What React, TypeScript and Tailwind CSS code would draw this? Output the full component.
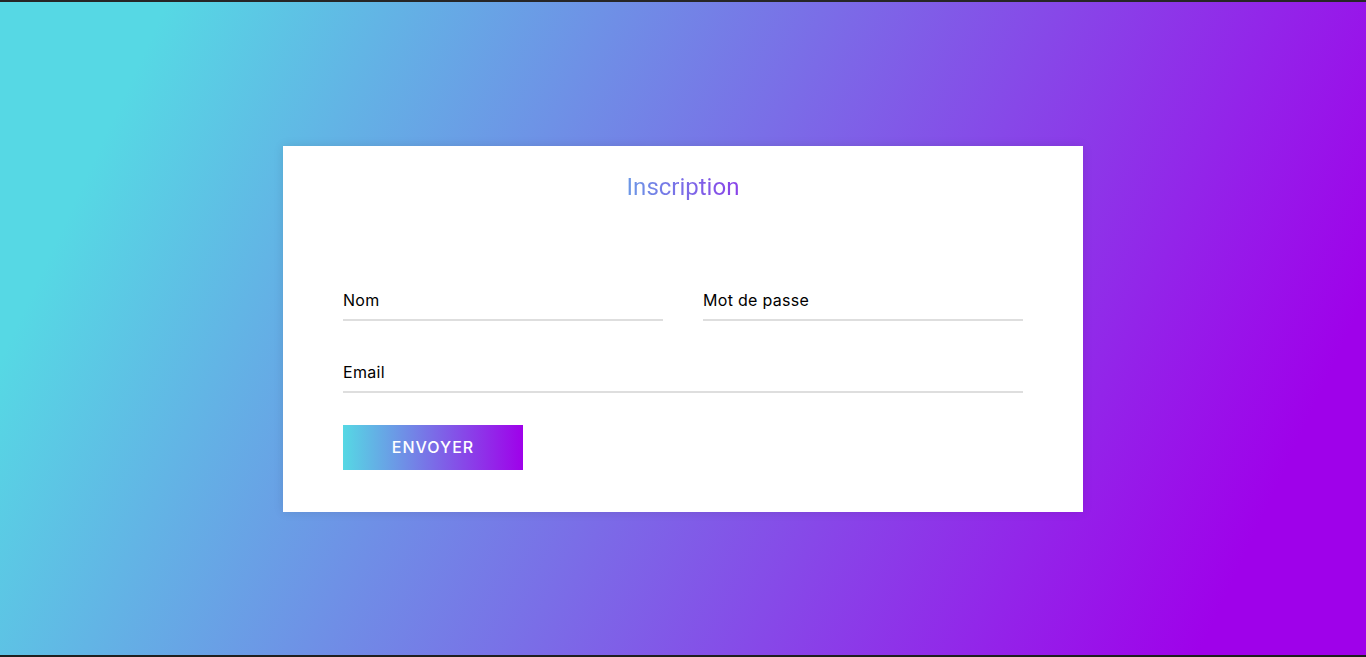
import React from "react";

const poppins = { fontFamily: "Inter, 'Open Sans', sans-serif" };

function Field({ label }: { label: string }) {
  return (
    <div className="relative h-[40px] w-full border-b-2 border-[#dedede]">
      <span
        className="absolute bottom-[8px] left-0 text-[16px] leading-[22px] tracking-[0.3px] text-black"
        style={poppins}
      >
        {label}
      </span>
    </div>
  );
}

export default function App() {
  return (
    <div className="flex h-[657px] w-full flex-col bg-[#222222]">
      <div className="h-[2px] w-full bg-[#262626]" />
      <div className="flex flex-1 items-center justify-center bg-[linear-gradient(115deg,#56d8e4_10%,#9f01ea_90%)]">
        <div className="w-[800px] bg-white px-[60px] pb-[10px] pt-[25px] shadow-[0_0_10px_rgba(0,0,0,0.1)]">
          <div className="mb-[78px] flex justify-center">
            <span className="inline-block bg-[linear-gradient(to_right,#56d8e4,#9f01ea)] bg-clip-text px-[84px] text-center text-[24px] leading-[32px] text-transparent [font-family:Roboto,sans-serif]">
              Inscription
            </span>
          </div>
          <div className="flex gap-[40px]">
            <Field label="Nom" />
            <Field label="Mot de passe" />
          </div>
          <div className="mt-[32px]">
            <Field label="Email" />
          </div>
          <button
            className="mb-[32px] mt-[32px] flex h-[45px] w-[180px] items-center justify-center bg-[linear-gradient(to_right,#56d8e4,#9f01ea)] text-[16px] font-medium uppercase tracking-[1px] text-white"
            style={poppins}
          >
            Envoyer
          </button>
        </div>
      </div>
      <div className="h-[2px] w-full bg-[#1f1f1f]" />
    </div>
  );
}
